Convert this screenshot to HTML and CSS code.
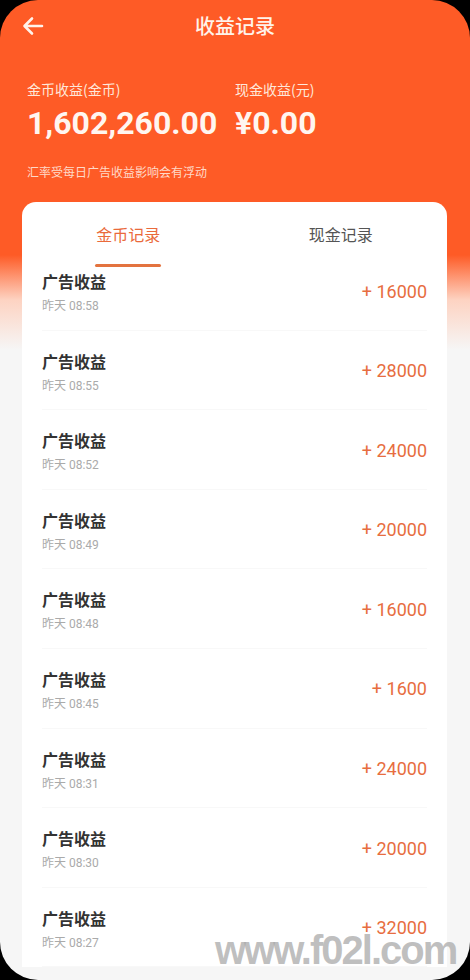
FILE: index.html
```html
<!DOCTYPE html>
<html lang="zh-CN">
<head>
    <meta charset="UTF-8">
    <meta name="viewport" content="width=device-width, initial-scale=1.0">
    <title>收益记录</title>
    <link rel="stylesheet" href="styles.css">
</head>
<body>
    <div class="phone">
        <header class="topbar">
            <a href="#" class="back">
                <svg width="22" height="20" viewBox="0 0 22 20">
                    <path d="M20 10H3M10 2.5L2.5 10L10 17.5" fill="none" stroke="#fff3ea" stroke-width="2.6" stroke-linecap="round" stroke-linejoin="round"/>
                </svg>
            </a>
            <h1>收益记录</h1>
            <span></span>
        </header>

        <section class="summary">
            <div class="stats">
                <div class="stat">
                    <div class="label">金币收益(金币)</div>
                    <div class="value">1,602,260.00</div>
                </div>
                <div class="stat">
                    <div class="label">现金收益(元)</div>
                    <div class="value">¥0.00</div>
                </div>
            </div>
            <p class="note">汇率受每日广告收益影响会有浮动</p>
        </section>

        <section class="card">
            <nav class="tabs">
                <div class="tab active">金币记录</div>
                <div class="tab">现金记录</div>
            </nav>
            <ul class="records">
                <li class="record">
                    <div class="info"><div class="name">广告收益</div><div class="time">昨天 08:58</div></div>
                    <div class="amount">+ 16000</div>
                </li>
                <li class="record">
                    <div class="info"><div class="name">广告收益</div><div class="time">昨天 08:55</div></div>
                    <div class="amount">+ 28000</div>
                </li>
                <li class="record">
                    <div class="info"><div class="name">广告收益</div><div class="time">昨天 08:52</div></div>
                    <div class="amount">+ 24000</div>
                </li>
                <li class="record">
                    <div class="info"><div class="name">广告收益</div><div class="time">昨天 08:49</div></div>
                    <div class="amount">+ 20000</div>
                </li>
                <li class="record">
                    <div class="info"><div class="name">广告收益</div><div class="time">昨天 08:48</div></div>
                    <div class="amount">+ 16000</div>
                </li>
                <li class="record">
                    <div class="info"><div class="name">广告收益</div><div class="time">昨天 08:45</div></div>
                    <div class="amount">+ 1600</div>
                </li>
                <li class="record">
                    <div class="info"><div class="name">广告收益</div><div class="time">昨天 08:31</div></div>
                    <div class="amount">+ 24000</div>
                </li>
                <li class="record">
                    <div class="info"><div class="name">广告收益</div><div class="time">昨天 08:30</div></div>
                    <div class="amount">+ 20000</div>
                </li>
                <li class="record">
                    <div class="info"><div class="name">广告收益</div><div class="time">昨天 08:27</div></div>
                    <div class="amount">+ 32000</div>
                </li>
            </ul>
        </section>

        <div class="watermark">www.f02l.com</div>
    </div>
</body>
</html>
```

FILE: styles.css
```css
html, body{
    margin: 0;
    padding: 0;
    background: #000;
}
body{
    font-family: Roboto, "Noto Sans CJK SC", sans-serif;
}
.phone{
    position: relative;
    width: 470px;
    height: 980px;
    border-radius: 38px;
    overflow: hidden;
    background: linear-gradient(180deg, #fe5b26 0, #fe5b26 255px, #fdd3c2 300px, #f6f6f6 350px, #f6f6f6 100%);
}

/* top bar */
.topbar{
    display: grid;
    grid-template-columns: 1fr auto 1fr;
    align-items: center;
    height: 52px;
    padding: 0 22px;
}
.back{
    display: flex;
    align-items: center;
}
.topbar h1{
    margin: 0;
    font-size: 20px;
    font-weight: 500;
    line-height: 52px;
    color: #fff3ea;
    font-family: "Noto Sans CJK SC", sans-serif;
}

/* summary */
.summary{
    padding: 27px 27px 0;
}
.stats{
    display: grid;
    grid-template-columns: 208px 1fr;
}
.label{
    font-size: 14px;
    line-height: 20px;
    color: #ffe7da;
    font-family: "Noto Sans CJK SC", sans-serif;
}
.value{
    margin-top: 4px;
    font-size: 32px;
    line-height: 40px;
    font-weight: 700;
    color: #fff6f0;
}
.note{
    margin: 20px 0 0;
    font-size: 12px;
    line-height: 18px;
    color: #ffd9c8;
    font-family: "Noto Sans CJK SC", sans-serif;
}

/* card */
.card{
    margin: 21px 23px 0 22px;
    background: #fff;
    border-radius: 14px 14px 0 0;
    font-family: "Noto Sans CJK SC", sans-serif;
}
.tabs{
    display: grid;
    grid-template-columns: 1fr 1fr;
}
.tab{
    display: flex;
    flex-direction: column;
    align-items: center;
    padding-top: 20px;
    font-size: 16px;
    line-height: 24px;
    color: #555;
}
.tab::after{
    content: "";
    display: block;
    width: 66px;
    height: 3px;
    margin-top: 18px;
    border-radius: 2px;
    background: transparent;
}
.tab.active{
    color: #ea6a3b;
}
.tab.active::after{
    background: #e3733f;
}

.records{
    list-style: none;
    margin: 0;
    padding: 0 20px;
}
.record{
    display: flex;
    align-items: center;
    justify-content: space-between;
    padding: 20px 0 15.6px;
    border-bottom: 1px solid #f8f8f8;
}
.record:first-child{
    padding-top: 4px;
}
.name{
    font-size: 16px;
    line-height: 20px;
    font-weight: 700;
    color: #333;
}
.time{
    margin-top: 7px;
    font-size: 12px;
    line-height: 16px;
    color: #aaa;
    font-family: Roboto, "Noto Sans CJK SC", sans-serif;
}
.amount{
    margin-top: -2px;
    font-family: Roboto, sans-serif;
    font-size: 18px;
    line-height: 24px;
    color: #e76d40;
}

/* watermark over the last row */
.watermark{
    position: absolute;
    left: 215px;
    top: 930px;
    font-family: "Liberation Sans", sans-serif;
    font-size: 40px;
    line-height: 40px;
    font-weight: 700;
    letter-spacing: -2px;
    color: rgba(170, 170, 170, 0.75);
}
```
